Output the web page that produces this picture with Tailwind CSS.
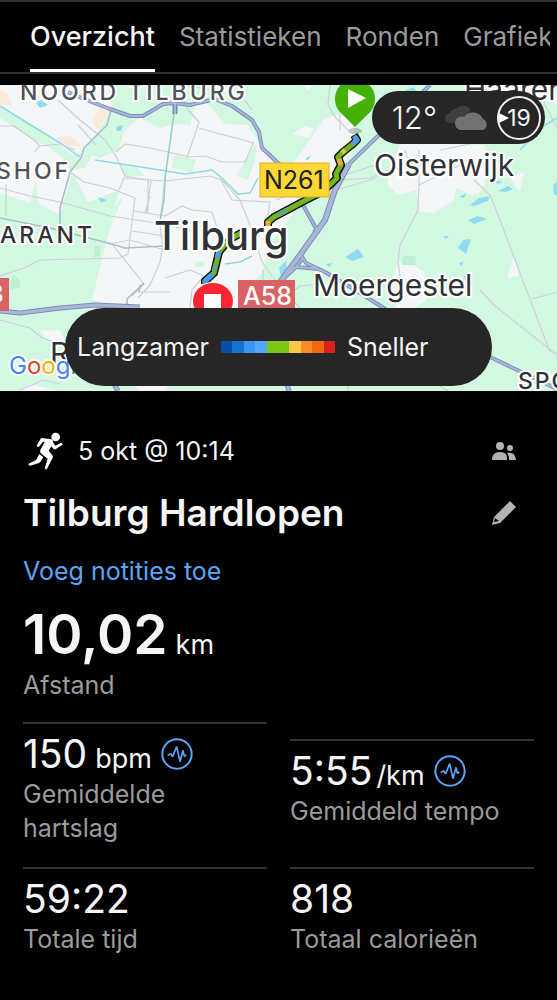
<!DOCTYPE html>
<html lang="nl">
<head>
    <meta charset="UTF-8">
    <meta name="viewport" content="width=device-width, initial-scale=1.0">
    <script src="https://cdn.jsdelivr.net/npm/@tailwindcss/browser@4"></script>
    <title>Tilburg Hardlopen</title>
</head>
<body class="bg-black text-[#f5f5f5] font-['Inter',sans-serif] text-[25px] leading-[34px] min-h-screen">

    <!-- Tabs -->
    <nav class="border-y-2 border-[#2e2e2e] mb-[11px] pl-[30px] pr-[7px] text-[26px]">
        <div class="flex gap-6 overflow-hidden whitespace-nowrap">
            <a href="#overzicht" class="shrink-0 text-[27px] font-medium pt-[18px] pb-[15px] border-b-3 border-white">Overzicht</a>
            <a href="#statistieken" class="shrink-0 text-[#9b9b9b] pt-[18px]">Statistieken</a>
            <a href="#ronden" class="shrink-0 text-[#9b9b9b] pt-[18px]">Ronden</a>
            <a href="#grafieken" class="shrink-0 text-[#9b9b9b] pt-[18px]">Grafieken</a>
        </div>
    </nav>

    <!-- Map -->
    <section class="relative h-[306px] overflow-hidden bg-[#d3f8e2]">
        <svg class="block w-full h-full" viewBox="0 85 557 306" preserveAspectRatio="xMinYMin slice" role="img" aria-label="Kaart">
            <!-- built-up areas -->
            <g fill="#f5f6f8">
                <path d="M0 85H108L112 108L98 132L80 156L72 172L88 202L119 190L108 235L92 300L128 308H236L262 272L272 240L300 205L335 182L345 160L358 145L352 118L345 113L325 118L292 165L274 164L256 138L248 125L225 124L208 104L196 103L190 125L175 124L160 128L140 118L125 130L118 150L100 158L78 152L60 160L40 140L0 108Z"/>
                <path d="M0 106L40 134L62 158L72 172L60 215L38 203L36 180L30 203L0 193Z"/>
                <path d="M292 134L306 126L314 129L309 138Z"/>
                <path d="M303 85H313L308 91Z"/>
                <path d="M387 184L400 144L432 142L484 145L493 170L478 188L474 196L456 188L454 200L434 213L420 212L416 190L398 195Z"/>
                <path d="M474 180L486 182L477 196ZM510 178L524 172L520 192Z"/>
                <path d="M398 262L415 266L424 272L428 290L426 300L415 308H396L392 280Z"/>
                <path d="M514 256L519 276L507 278ZM40 331L60 330L66 344L48 340ZM20 391L30 384L60 391ZM135 386H168L165 391H140Z"/>
                <path d="M514 85H557V104L540 96Z"/>
            </g>
            <!-- parks -->
            <g fill="#d3f8e2">
                <path d="M0 108L20 118L45 135L80 160L76 168L50 148L30 138L0 118Z"/>
                <path d="M112 112L125 112L108 140L98 145L85 168L74 170L80 156Z"/>
                <path d="M120 165L138 168L144 176L126 176ZM174 155L196 160L192 172L172 168ZM246 160L257 142L255 160L248 180L236 176ZM196 262L204 261L204 267L195 267Z"/>
                <path d="M262 272L275 268L300 290L290 308H236ZM106 242L114 218L124 195L116 205Z"/>
            </g>
            <path d="M92 122L102 104L112 106L98 130ZM56 138L70 136L82 146L66 146ZM0 90L8 94L12 106L0 104Z" fill="#fbeadb"/>
            <path d="M95 246H100V256L93 258ZM12 274L20 280V287L10 290ZM403 256H416L415 265H402Z" fill="#bdf0d3"/>
            <!-- water -->
            <g fill="#8fdcf0">
                <path d="M36 103L41 100L48 105L40 108ZM116 127L123 125L121 131H117ZM98 197L107 200L101 203ZM345 257L358 249L364 257L352 261ZM458 248L463 240L471 239L466 254ZM468 220L478 216L487 219L474 224ZM470 205L479 198L490 196L488 201L474 206ZM498 191L508 186L513 189L506 192ZM495 180L503 182L497 184ZM443 236L449 236L446 239ZM326 264L333 263L329 267ZM553 185L557 182V196L554 194ZM279 268L286 261L287 268L281 276ZM406 90L414 87L416 91L405 96ZM459 197L466 193L464 198ZM459 263L464 262L461 266ZM305 159L311 155L308 160ZM463 277L467 274L466 280Z"/>
            </g>
            <g fill="none" stroke="#8fdae4" stroke-width="1.5">
                <path d="M0 106L60 143L80 157"/>
                <path d="M95 160L160 170L185 174L212 170L222 178L238 194L250 193L258 178"/>
                <path d="M225 264L240 262L252 256M520 150L545 125L557 118"/>
            </g>
            <!-- streets -->
            <g fill="none" stroke="#cbd0d9" stroke-width="1.2" stroke-linejoin="round">
                <path d="M0 126L14 126L34 140L40 146L60 144L75 150M35 152L40 145M58 100L80 120L105 140L116 156L125 176L148 180M116 152L125 144L150 148L190 157L205 156L222 162L245 162L254 142"/>
                <path d="M0 188L30 196L60 202L110 216L150 222L200 232M6 184V216M70 172L84 182L110 188L135 198L133 214L128 254L120 258L40 260L24 268L0 276"/>
                <path d="M112 244L144 284L132 296M108 244L130 240L165 250M119 190L124 178L165 181L210 176L222 180L240 200L250 225L262 262L275 280L300 308"/>
                <path d="M148 180V213M151 181L146 214M133 211L165 216L182 206L192 210L212 212L218 230M163 245L160 262L150 285L138 298M138 292H170M190 308L192 290L204 276L190 270L165 278M165 178L160 225L163 250M132 231L165 236M145 213L150 196"/>
                <path d="M180 90L188 110L199 122L187 158M199 128L220 134L236 138L254 143M220 178L232 200L270 202L268 215M330 85L328 105L336 118L348 130M340 112V130"/>
                <path d="M276 200L330 180L375 165M303 200L370 180L400 168M340 180L370 178L400 165M419 150L419 182L418 210L400 245L398 262L400 276M405 150L408 160M419 185L460 165M474 180L490 195L500 220L550 352M480 290L495 306L557 355M532 299L557 292M540 85L545 105L557 128M440 150L490 140M460 125L480 120M295 290L300 286L320 284M263 270L263 285"/>
                <path d="M0 320L30 328L42 338L62 344L66 352M20 390L44 380L60 384M348 386V391M440 386L448 391M260 165L268 175M233 85L252 110M186 85L220 92M78 125L96 145"/>
            </g>
            <!-- secondary roads -->
            <g fill="none" stroke="#b0bbcb" stroke-width="1.6" stroke-linejoin="round">
                <path d="M111 110L107 125L84 148L81 158L70 172L60 208L60 224"/>
                <path d="M174 114L165 178L164 200L160 220" stroke="#9bcfc0"/>
                <path d="M0 218L50 228L108 243L125 248L165 246M144 283L127 299V306M140 285L139 292"/>
            </g>
            <!-- motorways -->
            <g fill="none" stroke-linejoin="round">
                <g stroke="#7c8dbb">
                    <path stroke-width="4" d="M68 92L84 99L110 109L130 116L143 116L163 104L175 103L190 105L215 99L232 106L252 120L259 132L262 148L277 162L300 180"/>
                    <path stroke-width="5" d="M175 103V114"/>
                    <path stroke-width="4" d="M430 85L377 137L349 164"/>
                    <path stroke-width="6" d="M349 164L335 190L325 220L300 255L280 282L258 312"/>
                    <path stroke-width="4" d="M300 254L306 263L325 272L360 293L390 312L490 357L557 389M283 279L296 267L320 269M303 258L296 267L285 272M303 205L318 232M313 232L320 231"/>
                    <path stroke-width="5" d="M0 311L20 313L60 308L95 305L140 307M114 384L118 391M287 384L289 391"/>
                </g>
                <g stroke="#a9b6d8">
                    <path stroke-width="2" d="M68 92L84 99L110 109L130 116L143 116L163 104L175 103L190 105L215 99L232 106L252 120L259 132L262 148L277 162L300 180"/>
                    <path stroke-width="2" d="M430 85L377 137L349 164M175 103V114"/>
                    <path stroke-width="4" d="M349 164L335 190L325 220L300 255L280 282L258 312"/>
                    <path stroke-width="2" d="M300 254L306 263L325 272L360 293L390 312L490 357L557 389M283 279L296 267L320 269M303 258L296 267L285 272M303 205L318 232"/>
                    <path stroke-width="3" d="M0 311L20 313L60 308L95 305L140 307M114 384L118 391M287 384L289 391"/>
                </g>
            </g>
            <!-- route -->
            <g fill="none" stroke-linejoin="round">
                <path stroke="#111" stroke-width="8" d="M354 135L357 140L353 144L343 152L338 157L341 165L336 174L337 178L332 183L322 192L306 200L274 217L268 222V226M243 232L232 238L224 246L219 252L214 273L205 281V284"/>
                <path stroke="#72b51e" stroke-width="5" d="M355 137L357 140L353 144L343 152L338 157L341 165L336 174L337 178L332 183L322 192L306 200L274 217L268 222V226M243 232L232 238L224 246L219 252L214 273L205 281V284"/>
                <path stroke="#4a9be8" stroke-width="5" d="M354 136L357 140L353 144M219 251L217 258M213 274L205 281V284"/>
                <path stroke="#5fa77e" stroke-width="5" d="M278 215L287 210M216 264L214 271"/>
                <path stroke="#f2a93b" stroke-width="5" d="M339 159L341 165M268 221V226"/>
                <path stroke="#c7cf3a" stroke-width="5" d="M345 150L342 153"/>
            </g>
            <!-- pins -->
            <ellipse cx="355" cy="131" rx="7" ry="3" fill="#000" fill-opacity=".2"/>
            <path d="M355 127L339 111A20 20 0 1 1 371 111Z" fill="#45b108"/>
            <path d="M348 89V108L366 98Z" fill="#fff"/>
            <ellipse cx="213" cy="301" rx="21" ry="19" fill="#fff"/>
            <ellipse cx="213" cy="301" rx="20" ry="18" fill="#fb2631"/>
            <rect x="204" y="294" width="17" height="17" fill="#fff"/>
            <!-- road shields -->
            <rect x="260" y="163" width="69" height="34" fill="#fdd835" stroke="#dfae25"/>
            <rect x="238" y="280" width="57" height="34" fill="#d96265"/>
            <rect x="-20" y="278" width="29" height="33" fill="#d96265"/>
            <g font-size="25">
                <text x="264" y="189" fill="#202124">N261</text>
                <text x="243" y="305" fill="#fff" font-weight="500">A58</text>
                <text x="-12" y="303" fill="#fff" font-weight="500">3</text>
            </g>
            <!-- place names -->
            <g fill="#303236" stroke="#fff" stroke-width="4" stroke-linejoin="round" paint-order="stroke">
                <text x="154" y="250" font-size="40" font-weight="500">Tilburg</text>
                <text x="374" y="176" font-size="30">Oisterwijk</text>
                <text x="313" y="296" font-size="30">Moergestel</text>
                <text x="464" y="100" font-size="30">Haaren</text>
                <text x="50" y="364" font-size="30">Riel</text>
                <g font-size="23" font-weight="500">
                    <text x="20" y="100" fill="#505257" letter-spacing="3">NOORD TILBURG</text>
                    <text x="-4" y="179" fill="#505257" letter-spacing="3">SHOF</text>
                    <text x="0" y="243" letter-spacing="3">ARANT</text>
                    <text x="518" y="389" letter-spacing="2">SPOORD</text>
                </g>
                <text x="9" y="374" font-size="24"><tspan fill="#4285f4">G</tspan><tspan fill="#db4437">o</tspan><tspan fill="#f4b400">o</tspan><tspan fill="#4285f4">g</tspan><tspan fill="#0f9d58">l</tspan><tspan fill="#db4437">e</tspan></text>
            </g>
        </svg>

        <div class="absolute top-[6px] right-3 h-[53px] pl-5 pr-1 flex items-center rounded-full bg-[#262626]">
            <span class="text-[31px] font-light">12°</span>
            <svg class="w-11 h-6 ml-2 mr-2" viewBox="0 0 44 24">
                <path d="M5 17A5 5 0 0 1 5 7A6 6 0 0 1 11 3A9 9 0 0 1 25 3L22 17Z" fill="#404040"/>
                <path d="M15 24A7 7 0 0 1 14 11Q17 10 19 11A11 11 0 0 1 38 13A6 6 0 0 1 38 24Z" fill="#727272"/>
            </svg>
            <span class="relative flex items-center justify-center w-11 h-11 rounded-full border-2 border-[#f0f0f0] text-[23px]">
                <svg class="absolute left-0 w-[10px] h-[10px]" viewBox="0 0 10 10"><path d="M0 0L10 5L0 10Z" fill="#fff"/></svg>
                19
            </span>
        </div>

        <div class="absolute bottom-[5px] inset-x-[65px] h-[78px] pl-3 flex items-center gap-3 rounded-full bg-[#262626]">
            <span>Langzamer</span>
            <div class="flex w-[114px] h-3">
                <span class="flex-1 bg-[#084da5]"></span>
                <span class="flex-1 bg-[#1873d0]"></span>
                <span class="flex-1 bg-[#3c94f4]"></span>
                <span class="flex-1 bg-[#55a7fc]"></span>
                <span class="flex-2 bg-[#7dc617]"></span>
                <span class="flex-1 bg-[#fcc84b]"></span>
                <span class="flex-1 bg-[#fb8b2b]"></span>
                <span class="flex-1 bg-[#f0690c]"></span>
                <span class="flex-1 bg-[#d8201f]"></span>
            </div>
            <span>Sneller</span>
        </div>
    </section>

    <!-- Activity -->
    <main class="px-[23px] pt-[41px]">
        <div class="flex items-center h-[38px]">
            <svg class="w-[35px] h-[38px] ml-[5px] mr-[15px]" viewBox="84 36 105 114" fill="#fff">
                <circle cx="167" cy="51" r="13"/>
                <path d="M126 54L154 58Q161 61 160 68L166 77L184 68L189 73L167 88Q163 89 160 86L154 79L146 92L157 105Q160 109 158 114L141 146Q137 150 134 145L143 116L124 101Q118 96 121 90L134 66L129 65L117 80Q112 82 110 77L121 58Q123 54 126 54Z"/>
                <path d="M118 102L130 112L121 126Q119 129 115 130L90 137Q84 136 86 131L108 120Z"/>
            </svg>
            <span>5 okt @ 10:14</span>
            <button class="ml-auto mr-[17px]" aria-label="Privacy">
                <svg class="w-[26px] h-5" viewBox="0 0 26 20" fill="#b3b3b3">
                    <circle cx="9" cy="5" r="4"/>
                    <circle cx="19" cy="7" r="3"/>
                    <path d="M1 19Q1 11 9 11T16 19ZM16 12Q24 10 25 19H18Q18 14 16 12Z"/>
                </svg>
            </button>
        </div>

        <div class="flex items-center justify-between mt-[18px] h-[50px]">
            <h1 class="text-[37px] font-semibold">Tilburg Hardlopen</h1>
            <button class="mr-[17px]" aria-label="Naam bewerken">
                <svg class="w-[26px] h-[26px]" viewBox="0 0 26 26" fill="#b3b3b3">
                    <path fill-rule="evenodd" d="M19 1L25 7L9 23L1 25L3 17ZM4 18L3 22L8 21Z"/>
                </svg>
            </button>
        </div>

        <a href="#notities" class="block w-fit mt-4 text-[#5ba6f6]">Voeg notities toe</a>

        <div class="pt-3">
            <p class="text-[55px] leading-[68px] font-semibold">10,02<span class="text-[27px] leading-none font-normal ml-2">km</span></p>
            <p class="text-[#9b9b9b]">Afstand</p>
        </div>

        <div class="grid grid-cols-2 gap-x-[23px] mt-5 items-center">
            <div class="border-t-2 border-[#333] pt-[7px] pb-[22px]">
                <div class="flex items-center h-[46px] gap-[9px]">
                    <p class="text-[39px] leading-[46px]">150<span class="text-[27px] leading-none ml-2">bpm</span></p>
                    <svg class="w-8 h-8" viewBox="0 0 96 96" fill="none" stroke="#5ba6f6"><circle cx="48" cy="48" r="44" stroke-width="6"/><path stroke-width="5" stroke-linejoin="bevel" d="M20 53L29 47L35 56L47 26L57 71L66 37L70 55L76 51"/></svg>
                </div>
                <p class="text-[#9b9b9b]">Gemiddelde<br>hartslag</p>
            </div>
            <div class="border-t-2 border-[#333] pt-[7px] pb-[22px]">
                <div class="flex items-center h-[46px] gap-[9px]">
                    <p class="text-[39px] leading-[46px]">5:55<span class="text-[27px] leading-none ml-1">/km</span></p>
                    <svg class="w-8 h-8" viewBox="0 0 96 96" fill="none" stroke="#5ba6f6"><circle cx="48" cy="48" r="44" stroke-width="6"/><path stroke-width="5" stroke-linejoin="bevel" d="M20 53L29 47L35 56L47 26L57 71L66 37L70 55L76 51"/></svg>
                </div>
                <p class="text-[#9b9b9b]">Gemiddeld tempo</p>
            </div>
            <div class="border-t-2 border-[#333] pt-[7px] pb-[22px]">
                <p class="text-[39px] leading-[46px]">59:22</p>
                <p class="text-[#9b9b9b]">Totale tijd</p>
            </div>
            <div class="border-t-2 border-[#333] pt-[7px] pb-[22px]">
                <p class="text-[39px] leading-[46px]">818</p>
                <p class="text-[#9b9b9b]">Totaal calorieën</p>
            </div>
        </div>
    </main>

</body>
</html>
